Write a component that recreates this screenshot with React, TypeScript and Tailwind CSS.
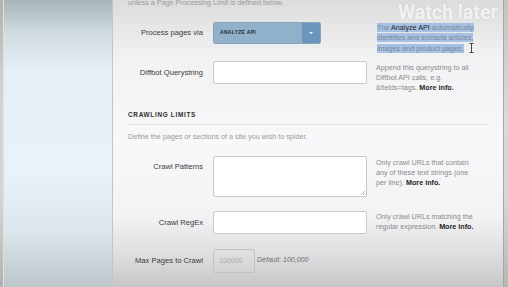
const FONT = { fontFamily: '"Liberation Sans", Arial, sans-serif' }

function Label({ children, h }: { children: React.ReactNode; h: string }) {
  return (
    <div className={`flex w-[75px] shrink-0 items-center justify-end whitespace-nowrap text-[7.6px] text-[#3a3a3a] ${h}`}>
      {children}
    </div>
  )
}

function Help({ children, mt }: { children: React.ReactNode; mt: string }) {
  return <div className={`-ml-[1px] whitespace-nowrap text-[7.2px] leading-[9.8px] text-[#8a8a8a] ${mt}`}>{children}</div>
}

function More() {
  return <span className="font-bold text-[#1e1e1e]">More info.</span>
}

export default function App() {
  return (
    <div className="relative flex h-[287px] w-[508px] overflow-hidden bg-[#d0d0d0]" style={FONT}>
      {/* left frame */}
      <div className="w-[4px] shrink-0 border-r border-[#e0e0e0] bg-[linear-gradient(to_bottom,#b0b0b0,#d2d2d2_30%,#d4d4d4_70%,#b2b2b2)]" />

      {/* sidebar */}
      <div className="w-[109px] shrink-0 border-r border-[#c2c6ca] bg-[linear-gradient(to_bottom,#a8b4b7_0%,#d2dde2_12%,#e6eff5_25%,#e9f2f8_60%,#dde6ec_80%,#bcc6ca_100%)]" />

      {/* main panel */}
      <div className="h-full w-[390px] shrink-0 bg-[linear-gradient(to_bottom,#dcdcdc_0%,#f2f2f4_20%,#f8f8fa_50%,#f3f3f5_75%,#dcdcde_90%,#c6c6c6_100%)] pl-[15px] pr-[14px]">
        <p className="-mt-[2px] text-[7.2px] leading-[10px] text-[#9a9a9a]">unless a Page Processing Limit is defined below.</p>

        {/* process pages via */}
        <div className="mt-[14px] flex h-[22px] items-start gap-[10px]">
          <Label h="h-[22px]">Process pages via</Label>
          <div className="flex h-[22px] w-[108px] shrink-0 overflow-hidden rounded-[2px] border border-[#86a5bd]">
            <div className="flex flex-1 items-center bg-[#90b1c9] pl-[6px] text-[5px] font-bold tracking-[0.3px] text-[#1f2a33]">ANALYZE API</div>
            <div className="flex w-[18px] items-center justify-center bg-[#6c95bd]">
              <div className="h-0 w-0 border-x-[2.5px] border-t-[2.5px] border-x-transparent border-t-white" />
            </div>
          </div>
          <div className="w-[36px] shrink-0" />
          <div className="mt-[1px] whitespace-nowrap text-[7.2px] leading-[9.8px] text-[#7d8898]">
            <span className="bg-[#a6c1e4]">The <span className="text-[#1e1e1e]">Analyze API</span> automatically</span>
            <br />
            <span className="bg-[#a6c1e4]">identifies and extracts articles,</span>
            <br />
            <span className="bg-[#a6c1e4]">images and product pages.</span>
            <svg className="ml-[5px] inline-block align-[-2px]" width="5" height="10" viewBox="0 0 5 10">
              <path d="M0.5 0.5 H4.5 M2.5 0.5 V9.5 M0.5 9.5 H4.5" stroke="#333" strokeWidth="0.9" fill="none" />
            </svg>
          </div>
        </div>

        {/* diffbot querystring */}
        <div className="mt-[17px] flex h-[23px] items-start gap-[10px]">
          <Label h="h-[23px]">Diffbot Querystring</Label>
          <div className="h-[23px] w-[154px] shrink-0 rounded-[2px] border border-[#c9c9c9] bg-white" />
          <Help mt="mt-[2px]">
            Append this querystring to all
            <br />
            Diffbot API calls, e.g.
            <br />
            &amp;fields=tags. <More />
          </Help>
        </div>

        {/* crawling limits */}
        <div className="mt-[26px] border-b border-[#e4e4e6] pb-[4px]">
          <h3 className="text-[6.4px] font-bold leading-[10px] tracking-[0.7px] text-[#2e2e2e]">CRAWLING LIMITS</h3>
        </div>
        <p className="mt-[7px] text-[7.2px] leading-[10px] text-[#9a9a9a]">Define the pages or sections of a site you wish to spider.</p>

        {/* crawl patterns */}
        <div className="mt-[14px] flex h-[41px] items-start gap-[10px]">
          <Label h="h-[22px]">Crawl Patterns</Label>
          <div className="relative h-[41px] w-[154px] shrink-0 rounded-[2px] border border-[#c9c9c9] bg-white">
            <svg className="absolute bottom-[1px] right-[1px]" width="5" height="5" viewBox="0 0 5 5">
              <path d="M1 5 L5 1 M3 5 L5 3" stroke="#999" strokeWidth="0.7" />
            </svg>
          </div>
          <Help mt="mt-[2px]">
            Only crawl URLs that contain
            <br />
            any of these text strings (one
            <br />
            per line). <More />
          </Help>
        </div>

        {/* crawl regex */}
        <div className="mt-[14px] flex h-[23px] items-start gap-[10px]">
          <Label h="h-[23px]">Crawl RegEx</Label>
          <div className="h-[23px] w-[154px] shrink-0 rounded-[2px] border border-[#c9c9c9] bg-white" />
          <Help mt="mt-[1px]">
            Only crawl URLs matching the
            <br />
            regular expression. <More />
          </Help>
        </div>

        {/* max pages */}
        <div className="mt-[15px] flex h-[24px] items-start gap-[10px]">
          <Label h="h-[23px]">Max Pages to Crawl</Label>
          <div className="flex h-[24px] w-[42px] shrink-0 items-center rounded-[2px] border border-[#c2c2c2] pl-[5px] text-[7px] text-[#a8a8a8]">
            100000
          </div>
          <span className="-ml-[8px] flex h-[23px] items-center text-[7px] italic text-[#6f6f6f]">Default: 100,000</span>
        </div>
      </div>

      {/* right frame */}
      <div className="flex-1 border-l border-[#a6a6a6] bg-[linear-gradient(to_bottom,#c4c4c4,#dadada_40%,#d6d6d6_70%,#b6b6b6)]" />

      {/* video overlay */}
      <div
        className="pointer-events-none absolute left-[398px] top-[4px] whitespace-nowrap text-[19.5px] font-bold leading-[18px] text-white/75 [text-shadow:0_0_2px_rgba(0,0,0,0.12)]"
        style={{ fontFamily: 'Roboto, "Liberation Sans", sans-serif' }}
      >
        Watch later
      </div>
    </div>
  )
}
